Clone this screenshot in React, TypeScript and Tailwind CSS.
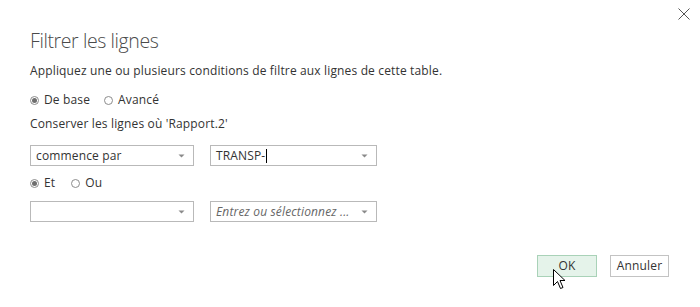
import React from "react";

function Radio({ checked, label }: { checked?: boolean; label: string }) {
  return (
    <div className="flex items-center gap-[5px]">
      <span className="w-[9px] h-[9px] rounded-full border border-[#8c8c8c] bg-white flex items-center justify-center">
        {checked && <span className="w-[5px] h-[5px] rounded-full bg-[#6e6e6e]" />}
      </span>
      <span>{label}</span>
    </div>
  );
}

function Arrow() {
  return (
    <svg width="7" height="4" viewBox="0 0 7 4" className="shrink-0">
      <path d="M0.5 0.5 L6.5 0.5 L3.5 3.5 Z" fill="#8a8a8a" />
    </svg>
  );
}

function Select({ children, width }: { children?: React.ReactNode; width: string }) {
  return (
    <div className={`${width} h-[21px] border border-[#b9b9b9] bg-white flex items-center justify-between pl-[5px] pr-[8px]`}>
      <div className="flex items-center">{children}</div>
      <Arrow />
    </div>
  );
}

export default function App() {
  return (
    <div className="w-[700px] h-[307px] bg-white relative font-['Open_Sans',sans-serif] text-[12px] tracking-[0.15px] text-[#333] overflow-hidden">
      <button className="absolute left-[678px] top-[8px] w-[12px] h-[12px] flex items-center justify-center">
        <svg width="12" height="12" viewBox="0 0 12 12">
          <path d="M0.5 0.5 L11.5 11.5 M11.5 0.5 L0.5 11.5" stroke="#555" strokeWidth="1" />
        </svg>
      </button>
      <div className="pl-[30px] pt-[27px] flex flex-col">
        <h1 className="h-[28px] leading-[28px] text-[19.5px] font-light text-[#4a4a4a] tracking-[-0.4px]">Filtrer les lignes</h1>
        <p className="mt-[7px] h-[18px] leading-[18px]">
          Appliquez une ou plusieurs conditions de filtre aux lignes de cette table.
        </p>
        <div className="mt-[11px] h-[18px] flex items-center gap-[14px]">
          <Radio checked label="De base" />
          <Radio label="Avancé" />
        </div>
        <p className="mt-[6px] h-[18px] leading-[18px]">Conserver les lignes où 'Rapport.2'</p>
        <div className="mt-[12px] flex gap-[16px]">
          <Select width="w-[164px]">
            <span>commence par</span>
          </Select>
          <Select width="w-[167px]">
            <span>TRANSP-</span>
            <span className="w-[1px] h-[14px] bg-black ml-[1px]" />
          </Select>
        </div>
        <div className="mt-[8px] h-[18px] flex items-center gap-[16px]">
          <Radio checked label="Et" />
          <Radio label="Ou" />
        </div>
        <div className="mt-[9px] flex gap-[16px]">
          <Select width="w-[164px]" />
          <Select width="w-[167px]">
            <span className="italic text-[#666]">Entrez ou sélectionnez ...</span>
          </Select>
        </div>
        <div className="mt-[33px] flex justify-end gap-[13px] pr-[31px]">
          <button className="w-[60px] h-[22px] border border-[#a9d2b8] bg-[#e5f3ea] text-[#333]">OK</button>
          <button className="w-[59px] h-[22px] border border-[#c3c3c3] bg-white text-[#333]">Annuler</button>
        </div>
      </div>
      <svg className="absolute left-[553px] top-[269px]" width="13" height="21" viewBox="0 0 13 21">
        <path d="M0.5 0.5 L0.5 16.5 L4.5 12.5 L7.5 19.5 L10 18.5 L7 11.5 L12 11.5 Z" fill="white" stroke="black" strokeWidth="1" strokeLinejoin="miter" />
      </svg>
    </div>
  );
}
